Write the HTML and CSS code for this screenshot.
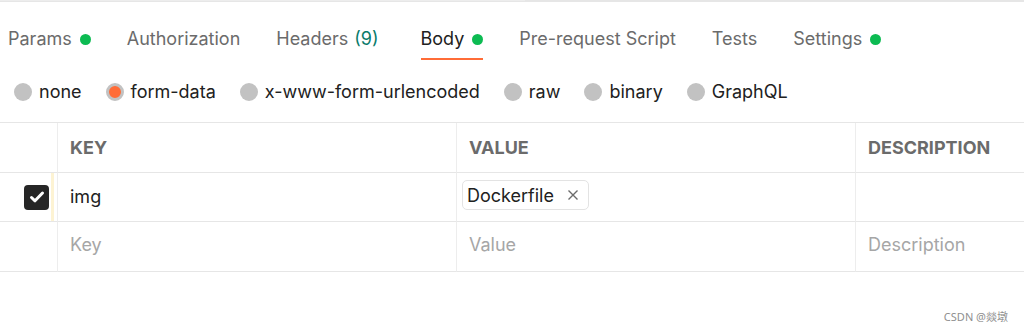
FILE: index.html
```html
<!DOCTYPE html>
<html lang="en">
<head>
  <meta charset="UTF-8" />
  <meta name="viewport" content="width=device-width, initial-scale=1.0" />
  <title>Request Body</title>
  <link rel="stylesheet" href="styles.css">
</head>
<body>

  <div class="topline"><div class="topline-input"></div></div>

  <div class="tabs">
    <div class="tab">Params <span class="dot"></span></div>
    <div class="tab">Authorization</div>
    <div class="tab">Headers <span class="count">(9)</span></div>
    <div class="tab active">Body <span class="dot"></span></div>
    <div class="tab">Pre-request Script</div>
    <div class="tab">Tests</div>
    <div class="tab">Settings <span class="dot"></span></div>
  </div>

  <div class="radios">
    <label class="radio"><span class="circle"></span>none</label>
    <label class="radio"><span class="circle checked"></span>form-data</label>
    <label class="radio"><span class="circle"></span>x-www-form-urlencoded</label>
    <label class="radio"><span class="circle"></span>raw</label>
    <label class="radio"><span class="circle"></span>binary</label>
    <label class="radio"><span class="circle"></span>GraphQL</label>
  </div>

  <div class="table">
    <div class="cell first"></div>
    <div class="cell head">KEY</div>
    <div class="cell head">VALUE</div>
    <div class="cell head last">DESCRIPTION</div>

    <div class="cell first">
      <span class="checkbox">
        <svg width="18" height="18" viewBox="0 0 18 18"><path d="M3.5 9.5l3.5 3.3L14.5 5" fill="none" stroke="#fff" stroke-width="3" stroke-linecap="round" stroke-linejoin="round"/></svg>
      </span>
      <span class="handle"></span>
    </div>
    <div class="cell">img</div>
    <div class="cell">
      <span class="chip">Dockerfile
        <svg width="12" height="12" viewBox="0 0 12 12"><path d="M1.5 1.5l9 9M10.5 1.5l-9 9" stroke="#6b6b6b" stroke-width="1.4"/></svg>
      </span>
    </div>
    <div class="cell last"></div>

    <div class="cell first"></div>
    <div class="cell placeholder">Key</div>
    <div class="cell placeholder">Value</div>
    <div class="cell placeholder last">Description</div>
  </div>

  <div class="watermark">CSDN @燚墩</div>

</body>
</html>
```

FILE: styles.css
```css
body {
  margin: 0;
  font-family: Inter, "Noto Sans", sans-serif;
  font-size: 18px;
  color: #212121;
  background: #fff;
  height: 332px;
  position: relative;
  overflow: hidden;
}

.topline {
  height: 2px;
  background: #e6e6e6;
}

.topline-input {
  width: 525px;
  height: 1px;
  background: #ededed;
}

.tabs {
  display: flex;
  gap: 36px;
  padding: 0 8px;
}

.tab {
  display: flex;
  align-items: center;
  line-height: 24px;
  padding: 25px 0 7px;
  color: #6b6b6b;
  border-bottom: 2px solid transparent;
}

.tab.active {
  color: #212121;
  border-bottom-color: #ff6c37;
}

.dot {
  display: inline-block;
  width: 11px;
  height: 11px;
  border-radius: 50%;
  background: #0cbb52;
  margin-left: 8px;
}

.count {
  color: #0a7b6b;
  margin: 0 6px 0 6px;
}

.radios {
  display: flex;
  gap: 24px;
  padding: 20px 14px 18px;
}

.radio {
  display: flex;
  align-items: center;
  gap: 7px;
  line-height: 24px;
}

.circle {
  width: 18px;
  height: 18px;
  border-radius: 50%;
  background: #c2c2c2;
  box-sizing: border-box;
}

.circle.checked {
  background: #ff6c37;
  border: 3px solid #c2c2c2;
}

.table {
  display: grid;
  grid-template-columns: 58px 399px 399px 1fr;
  grid-template-rows: 50px 49px 50px;
  border-top: 1px solid #e6e6e6;
}

.cell {
  display: flex;
  align-items: center;
  padding: 0 12px 1px;
  border-right: 1px solid #ededed;
  border-bottom: 1px solid #e6e6e6;
}

.cell.first {
  padding: 0 3px 0 24px;
  justify-content: space-between;
}

.cell.last {
  border-right: none;
}

.head {
  font-weight: 700;
  color: #6b6b6b;
}

.placeholder {
  color: #a6a6a6;
  padding-bottom: 5px;
}

.checkbox {
  width: 25px;
  height: 25px;
  border-radius: 4px;
  background: #262626;
  display: flex;
  align-items: center;
  justify-content: center;
}

.handle {
  width: 3px;
  align-self: stretch;
  background: #fdf3d3;
}

.chip {
  display: flex;
  align-items: center;
  gap: 13px;
  height: 28px;
  padding: 0 9px 0 4px;
  margin-left: -7px;
  margin-top: -3px;
  border: 1px solid #e3e3e3;
  border-radius: 5px;
}

.watermark {
  position: absolute;
  right: 16px;
  bottom: 8px;
  font-family: "Noto Sans", "Noto Sans CJK SC", sans-serif;
  font-size: 11px;
  color: #8f8f8f;
}
```
